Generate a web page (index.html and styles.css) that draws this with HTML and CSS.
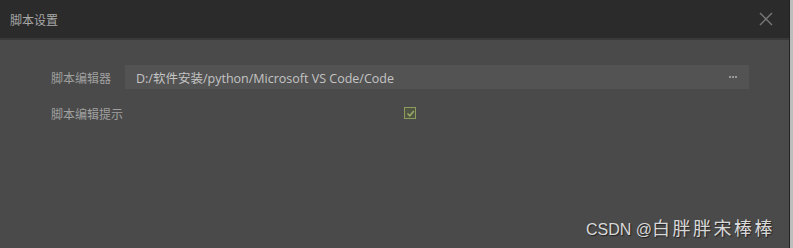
FILE: index.html
```html
<!DOCTYPE html>
<html lang="zh">
<head>
  <meta charset="UTF-8">
  <title>脚本设置</title>
  <link rel="stylesheet" href="styles.css">
</head>
<body>
  <div class="dialog">
    <header class="header">
      <span class="title">脚本设置</span>
      <svg class="close" width="14" height="14" viewBox="0 0 14 14">
        <path d="M1 1 L13 13 M13 1 L1 13" stroke="#7a7a7a" stroke-width="1.4" fill="none"/>
      </svg>
    </header>

    <!-- 设置内容 -->
    <div class="content">
      <div class="row">
        <label class="label">脚本编辑器</label>
        <div class="input">
          <span>D:/软件安装/python/Microsoft VS Code/Code</span>
          <span class="more"><i></i><i></i><i></i></span>
        </div>
      </div>
      <div class="row">
        <label class="label">脚本编辑提示</label>
        <span class="check">
          <svg width="9" height="9" viewBox="0 0 9 9">
            <path d="M1.5 4.5 L3.8 6.8 L7.8 2" stroke="#9aaa6a" stroke-width="1.5" fill="none"/>
          </svg>
        </span>
      </div>
    </div>

    <div class="mark">CSDN @<span class="mark-name">白胖胖宋棒棒</span></div>
  </div>
  <div class="edge"></div>
</body>
</html>
```

FILE: styles.css
```css
html, body {
  margin: 0;
  padding: 0;
  height: 248px;
  overflow: hidden;
  background: #c8c8c8;
}

* {
  box-sizing: border-box;
}

body {
  display: flex;
  font-family: "Noto Sans CJK SC", "Open Sans", sans-serif;
}

.dialog {
  width: 790px;
  height: 248px;
  background: #4a4a4a;
  display: flex;
  flex-direction: column;
  border-right: 1px solid #222;
}

.edge {
  flex: 1;
  background: #bdbdbd;
}

.header {
  height: 40px;
  background: #2b2b2b;
  border-bottom: 2px solid #3a3a3a;
  display: flex;
  align-items: center;
  justify-content: space-between;
  padding: 0 16px 0 10px;
}

.title {
  font-size: 12px;
  color: #a8a8a8;
}

.close {
  display: block;
}

.content {
  padding: 25px 0 0 51px;
  display: flex;
  flex-direction: column;
  gap: 12px;
}

.row {
  display: flex;
  align-items: center;
  height: 24px;
}

.label {
  width: 74px;
  font-size: 12px;
  color: #a0a0a0;
}

.input {
  width: 624px;
  height: 24px;
  background: #535353;
  display: flex;
  align-items: center;
  justify-content: space-between;
  padding: 0 12px 0 11px;
  font-family: "Open Sans", "Noto Sans CJK SC", sans-serif;
  font-size: 12.5px;
  color: #c4c4c4;
}

.more {
  display: flex;
  gap: 1px;
}

.more i {
  width: 2px;
  height: 2px;
  background: #9a9a9a;
}

.check {
  margin-left: 279px;
  width: 12px;
  height: 12px;
  border: 1px solid #8c9c5c;
  background: #505443;
  display: flex;
  align-items: center;
  justify-content: center;
}

.mark {
  align-self: flex-end;
  margin: auto 14px 8px 0;
  font-family: "Liberation Sans", "Noto Sans CJK SC", sans-serif;
  font-size: 16px;
  color: #d8d8d8;
  text-shadow: 1px 1px 1px #222;
}

.mark-name {
  font-family: "Noto Sans CJK SC", sans-serif;
  font-size: 18px;
  letter-spacing: 2.5px;
}
```
